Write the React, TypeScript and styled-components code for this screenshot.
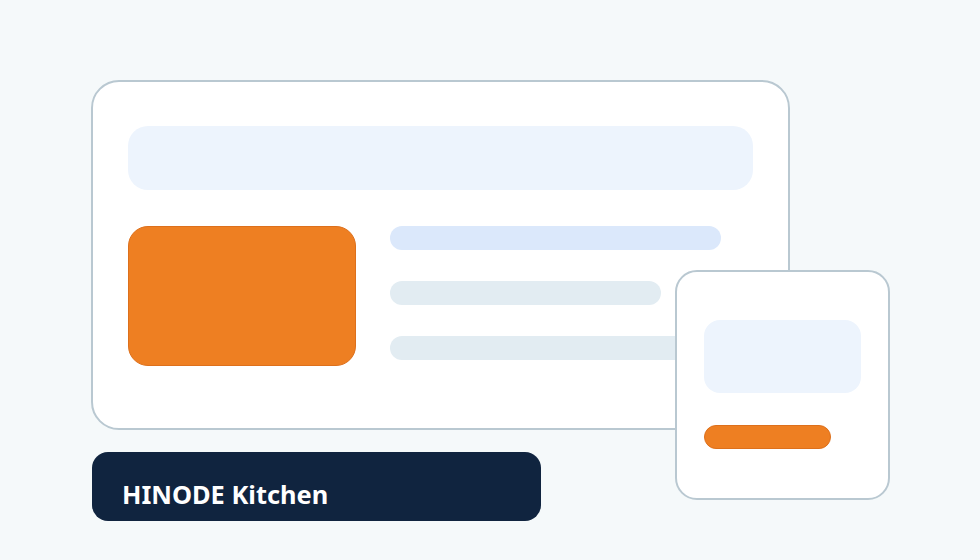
import { createGlobalStyle } from "styled-components";
import styled from "styled-components";

const GlobalStyle = createGlobalStyle`
	html, body {
		margin: 0;
		padding: 0;
		background: #f5f9fa;
	}
	body {
		font-family: "Noto Sans", "Open Sans", sans-serif;
	}
`;

const Stage = styled.div`
	position: relative;
	width: 980px;
	height: 560px;
	box-sizing: border-box;
	padding: 80px 0 0 91px;
	background: #f5f9fa;
	overflow: hidden;
`;

const MainCard = styled.div`
	box-sizing: border-box;
	width: 699px;
	height: 350px;
	padding: 44px 35px;
	background: #ffffff;
	border: 2px solid #b9c8d1;
	border-radius: 28px;
	display: flex;
	flex-direction: column;
	gap: 36px;
`;

const HeaderBar = styled.div`
	width: 625px;
	height: 64px;
	border-radius: 20px;
	background: #edf4fd;
`;

const Body = styled.div`
	display: flex;
	gap: 34px;
`;

const Thumb = styled.div`
	box-sizing: border-box;
	width: 228px;
	height: 140px;
	border-radius: 20px;
	background: #ee7f22;
	border: 1px solid #dd701c;
`;

const Lines = styled.div`
	display: flex;
	flex-direction: column;
	gap: 31px;
`;

const Line = styled.div<{ $width: number; $tone: "blue" | "gray" }>`
	width: ${(p) => p.$width}px;
	height: 24px;
	border-radius: 12px;
	background: ${(p) => (p.$tone === "blue" ? "#dbe8fb" : "#e2ecf2")};
`;

const Label = styled.div`
	box-sizing: border-box;
	margin-top: 22px;
	margin-left: 1px;
	width: 449px;
	height: 69px;
	padding: 27px 0 0 30px;
	border-radius: 16px;
	background: #10243f;
	color: #ffffff;
	font-size: 25.4px;
	font-weight: 700;
	line-height: 30px;
`;

const SideCard = styled.div`
	position: absolute;
	left: 675px;
	top: 270px;
	box-sizing: border-box;
	width: 215px;
	height: 230px;
	padding: 48px 27px 0;
	background: #ffffff;
	border: 2px solid #b9c8d1;
	border-radius: 22px;
	display: flex;
	flex-direction: column;
	gap: 32px;
`;

const SideBlock = styled.div`
	width: 157px;
	height: 73px;
	border-radius: 16px;
	background: #edf4fd;
`;

const SideButton = styled.div`
	box-sizing: border-box;
	width: 127px;
	height: 24px;
	border-radius: 12px;
	background: #ee7f22;
	border: 1px solid #dd701c;
`;

export default function App() {
	return (
		<>
			<GlobalStyle />
			<Stage>
				<MainCard>
					<HeaderBar />
					<Body>
						<Thumb />
						<Lines>
							<Line $width={331} $tone="blue" />
							<Line $width={271} $tone="gray" />
							<Line $width={310} $tone="gray" />
						</Lines>
					</Body>
				</MainCard>
				<Label>HINODE Kitchen</Label>
				<SideCard>
					<SideBlock />
					<SideButton />
				</SideCard>
			</Stage>
		</>
	);
}
